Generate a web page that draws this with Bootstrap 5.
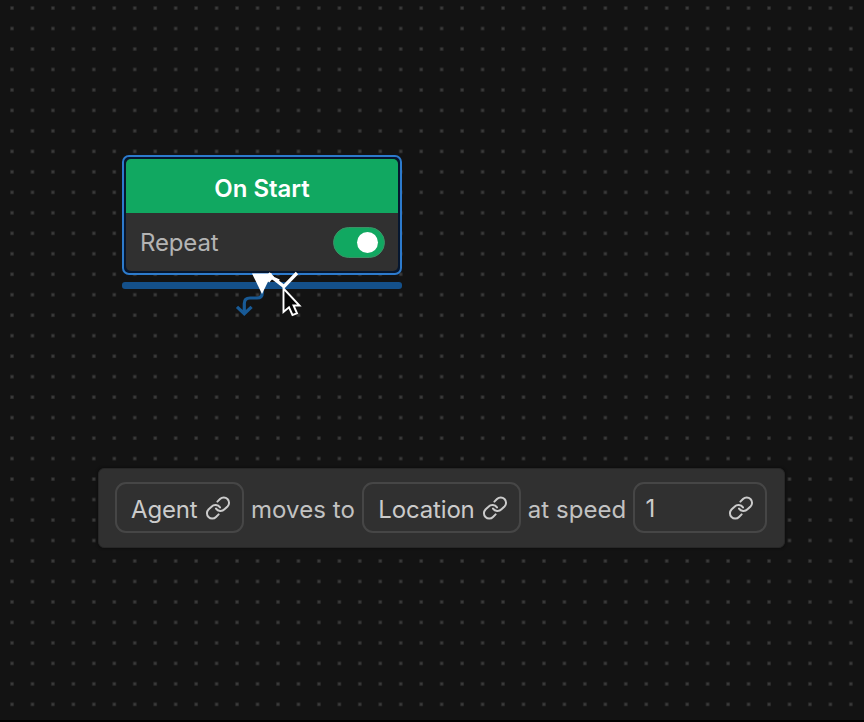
<!DOCTYPE html>
<html lang="en">
<head>
<meta charset="utf-8">
<title>Behavior graph</title>
<link href="https://cdn.jsdelivr.net/npm/bootstrap@5.3.0/dist/css/bootstrap.min.css" rel="stylesheet">
<style>
body { background: #131313; font-family: Inter, sans-serif; color: #c2c2c2; }
.graph { width: 864px; height: 722px; border-bottom: 2px solid #000; }
.node-start { left: 122px; top: 155px; width: 280px; height: 120px; border: 2px solid #2d7bcd; border-radius: 7px; background: #06172f; padding: 2px; }
.node-inner { border-radius: 5px; background: #303030; }
.node-title { height: 54px; padding-top: 6px; background: #11a861; color: #fff; font-weight: 600; font-size: 24px; line-height: 1; }
.node-row { height: 58px; padding: 0 13px 0 14px; font-size: 24px; color: #b4b4b4; letter-spacing: -.15px; }
.node-row > span:first-child { padding-top: 2px; }
.toggle { width: 52px; height: 31px; background: #11a861; border: 1px solid #3c9166; padding-right: 6px; }
.toggle-knob { width: 21px; height: 21px; background: #fff; }
.drop-line { left: 122px; top: 282px; width: 280px; height: 7px; border-radius: 3px; background: #14508a; }
.node-action { left: 98px; top: 468px; width: 687px; height: 80px; border: 1px solid #272727; border-radius: 6px; background: #303030; padding: 0 17px 2px 16px; font-size: 24px; line-height: 1; box-shadow: 0 0 3px #090909; }
.field { height: 51px; border: 2px solid #464646; border-radius: 11px; padding: 5px 11px 0 14px; color: #cbcbcb; }
.field svg { position: relative; top: -2px; }
.f-agent { width: 129px; letter-spacing: -.15px; }
.f-loc { width: 159px; letter-spacing: -.15px; }
.f-speed { width: 134px; padding-left: 10px; }
.f-speed > span { padding-bottom: 2px; }
.word { padding-top: 5px; white-space: nowrap; letter-spacing: .05px; }
.w-moves { width: 119px; }
.w-speed { width: 113px; }
</style>
</head>
<body>
<main class="graph position-relative overflow-hidden">
  <svg class="d-block position-absolute top-0 start-0" width="864" height="720" aria-hidden="true">
    <defs>
      <pattern id="dots" x="10" y="6" width="20.46" height="20.48" patternUnits="userSpaceOnUse">
        <rect x=".2" y=".2" width="3.6" height="3.6" rx=".6" fill="#2d2d2d"/>
        <rect x="1" y="1" width="2" height="2" fill="#3b3b3b"/>
      </pattern>
    </defs>
    <rect width="864" height="720" fill="url(#dots)"/>
  </svg>

  <section class="node-start position-absolute">
    <div class="node-inner h-100 overflow-hidden">
      <div class="node-title d-flex align-items-center justify-content-center">On Start</div>
      <div class="node-row d-flex align-items-center justify-content-between">
        <span>Repeat</span>
        <span class="toggle rounded-pill d-flex align-items-center justify-content-end"><span class="toggle-knob rounded-circle"></span></span>
      </div>
    </div>
  </section>
  <div class="drop-line position-absolute"></div>

  <!-- Connector arrow and mouse pointer -->
  <svg class="position-absolute top-0 start-0" width="864" height="720" aria-hidden="true">
    <path d="M262.3 289V292.5Q262.3 298 257 298H250Q244.3 298 244.3 303.5V312.5M237 306.8L244.3 313.7L251.6 306.8" fill="none" stroke="#185a96" stroke-width="3.2"/>
    <path d="M252 273.5H272L262 294Z" fill="#fff"/>
    <path d="M268.5 273.5L273 278L284 286.5L297 273M268 281.5L271.5 277.5L279 281" fill="none" stroke="#fff" stroke-width="3.4"/>
    <path d="M283.5 288.5V312L289 307.3L292.5 315L297 313.3L293.5 305.5H299.5Z" fill="#050505" stroke="#fff" stroke-width="1.9"/>
  </svg>

  <section class="node-action position-absolute d-flex align-items-center">
    <div class="field f-agent d-flex align-items-center justify-content-between"><span>Agent</span>
      <svg width="26" height="26" viewBox="0 0 26 26" fill="none" stroke="currentColor" stroke-width="2"><use href="#link"/></svg></div>
    <span class="word w-moves text-center">moves to</span>
    <div class="field f-loc d-flex align-items-center justify-content-between"><span>Location</span>
      <svg width="26" height="26" viewBox="0 0 26 26" fill="none" stroke="currentColor" stroke-width="2"><use href="#link"/></svg></div>
    <span class="word w-speed text-center">at speed</span>
    <div class="field f-speed d-flex align-items-center justify-content-between"><span>1</span>
      <svg width="26" height="26" viewBox="0 0 26 26" fill="none" stroke="currentColor" stroke-width="2"><use href="#link"/></svg></div>
  </section>
  <svg class="position-absolute" width="0" height="0" aria-hidden="true">
    <defs><path id="link" stroke-linecap="round" d="M12.4 6.6L15 4A5.3 5.3 0 0 1 22.5 11.5L19.5 14.3A5.6 5.6 0 0 1 11 13.6M13.6 19.4L11 22A5.3 5.3 0 0 1 3.5 14.5L6.5 11.7A5.6 5.6 0 0 1 15 12.4"/></defs>
  </svg>
</main>
<script src="https://cdn.jsdelivr.net/npm/bootstrap@5.3.0/dist/js/bootstrap.bundle.min.js"></script>
</body>
</html>
